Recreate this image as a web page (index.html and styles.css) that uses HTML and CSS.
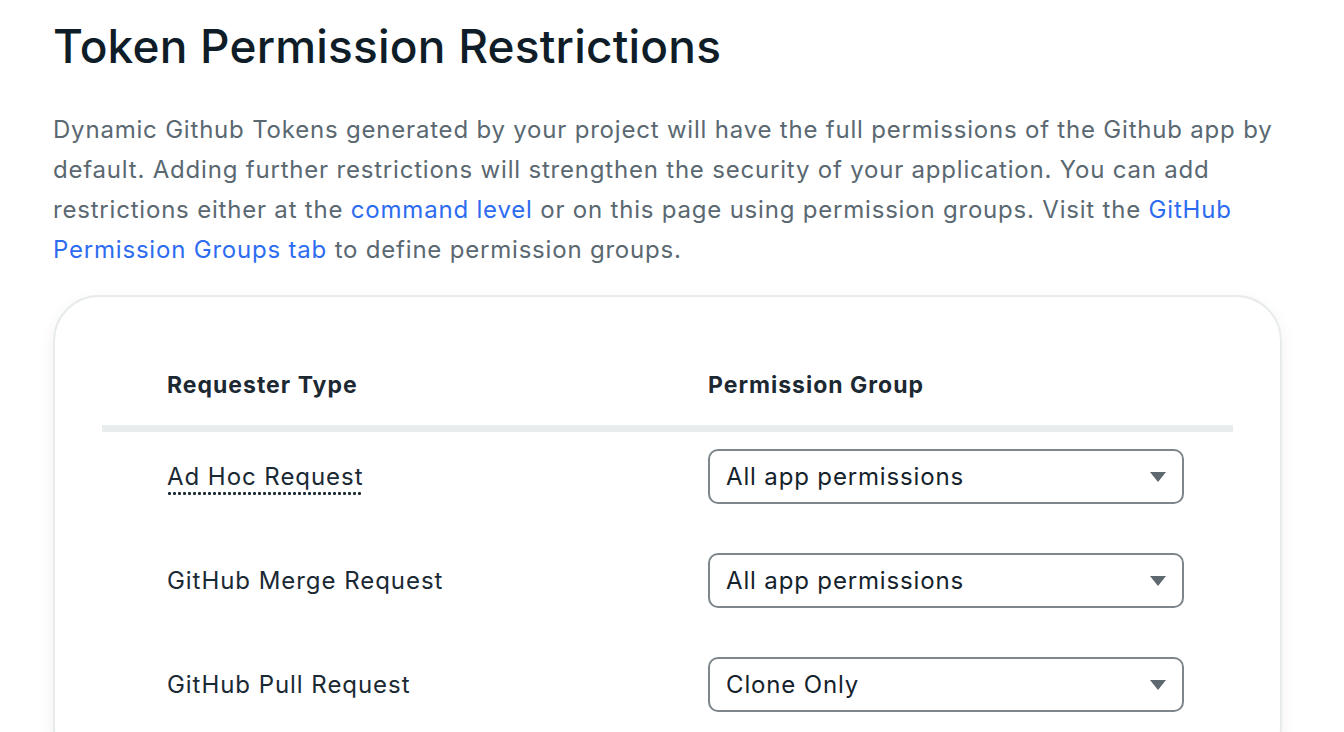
FILE: index.html
```html
<!DOCTYPE html>
<html lang="en">
<head>
<meta charset="utf-8">
<title>Token Permission Restrictions</title>
<link rel="stylesheet" href="styles.css">
</head>
<body>
<main class="page">
  <h1 class="title">Token Permission Restrictions</h1>
  <p class="intro">Dynamic Github Tokens generated by your project will have the full permissions of the Github app by default. Adding further restrictions will strengthen the security of your application. You can add restrictions either at the <a href="#" class="link">command level</a> or on this page using permission groups. Visit the <a href="#" class="link">GitHub Permission Groups tab</a> to define permission groups.</p>
  <section class="card">
    <div class="table">
      <div class="thead">
        <div class="th">Requester Type</div>
        <div class="th">Permission Group</div>
      </div>
      <div class="row">
        <div class="cell"><span class="abbr">Ad Hoc Request</span></div>
        <div class="cell"><div class="select"><span>All app permissions</span><span class="caret"></span></div></div>
      </div>
      <div class="row">
        <div class="cell">GitHub Merge Request</div>
        <div class="cell"><div class="select"><span>All app permissions</span><span class="caret"></span></div></div>
      </div>
      <div class="row">
        <div class="cell">GitHub Pull Request</div>
        <div class="cell"><div class="select"><span>Clone Only</span><span class="caret"></span></div></div>
      </div>
    </div>
  </section>
</main>
</body>
</html>
```

FILE: styles.css
```css
* { box-sizing: border-box; }
html, body { margin: 0; padding: 0; background: #ffffff; }
body {
  font-family: "Inter", "Lato", "Noto Sans", sans-serif;
  color: #14222c;
  overflow: hidden;
}
.page {
  width: 1229px;
  margin-left: 53px;
  padding-top: 18px;
}
.title {
  margin: 0;
  font-size: 46px;
  line-height: 56px;
  font-weight: 500;
  color: #0f1d28;
  letter-spacing: 0.2px;
}
.intro {
  margin: 36px 0 0 0;
  font-size: 24px;
  line-height: 40px;
  color: #5a6871;
  letter-spacing: 0.8px;
}
.link { color: #2d6cf0; text-decoration: none; }
.card {
  margin-top: 25px;
  border: 2px solid #e8ebeb;
  border-radius: 46px;
  box-shadow: 0 6px 18px rgba(20, 40, 40, 0.06);
  padding: 0 47px;
  height: 480px;
}
.table { display: flex; flex-direction: column; }
.thead, .row {
  display: grid;
  grid-template-columns: 606px 1fr;
}
.thead {
  padding-top: 72px;
  padding-bottom: 24px;
  border-bottom: 7px solid #e8ecec;
}
.th {
  padding-left: 65px;
  font-size: 23px;
  line-height: 32px;
  font-weight: 700;
  color: #1c2932;
  letter-spacing: 1px;
}
.th + .th { padding-left: 0; }
.row {
  padding-top: 17px;
  padding-bottom: 32px;
  align-items: center;
}
.cell {
  padding-left: 65px;
  font-size: 24px;
  line-height: 32px;
  color: #1a2934;
  letter-spacing: 0.95px;
}
.cell + .cell { padding-left: 0; }
.abbr {
  display: inline-block;
  line-height: 30px;
  padding-bottom: 3px;
  margin-bottom: -3px;
  background-image: radial-gradient(circle, #1a2934 1.3px, transparent 1.7px);
  background-size: 5px 3px;
  background-repeat: repeat-x;
  background-position: 0 100%;
}
.select {
  width: 476px;
  height: 55px;
  border: 2px solid #7d878b;
  border-radius: 10px;
  display: flex;
  align-items: center;
  justify-content: space-between;
  padding: 0 16px 0 16px;
  font-size: 24px;
  color: #14222c;
  letter-spacing: 0.85px;
}
.caret {
  width: 0;
  height: 0;
  border-left: 8px solid transparent;
  border-right: 8px solid transparent;
  border-top: 10px solid #5d686f;
}
```
